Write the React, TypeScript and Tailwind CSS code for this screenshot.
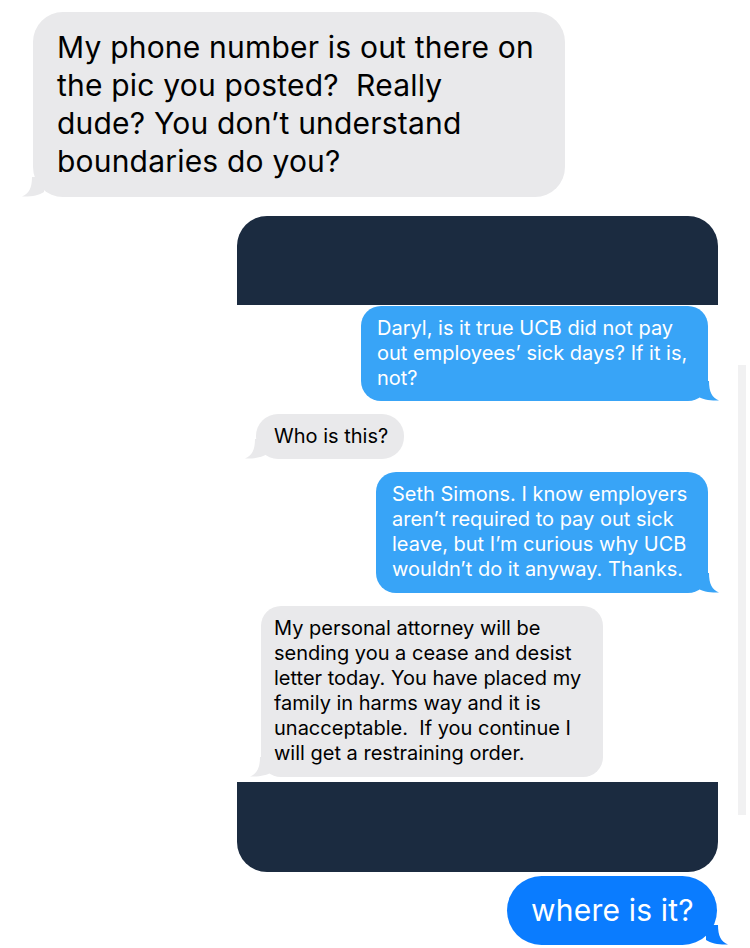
const font = { fontFamily: "Inter, 'Liberation Sans', sans-serif" };

function TailLeft({ color }: { color: string }) {
  return (
    <svg className="absolute -left-[11px] bottom-0" width="22" height="20" viewBox="0 0 22 20">
      <path d="M22 0 L22 15 C17 18.5 8 20 0 19.5 C7 16.5 10 11 10 0 Z" fill={color} />
    </svg>
  );
}

function TailRight({ color }: { color: string }) {
  return (
    <svg className="absolute -right-[11px] bottom-0" width="22" height="20" viewBox="0 0 22 20">
      <path d="M0 0 L0 15 C5 18.5 14 20 22 19.5 C15 16.5 12 11 12 0 Z" fill={color} />
    </svg>
  );
}

export default function App() {
  return (
    <div className="relative w-[750px] h-[948px] bg-white overflow-hidden text-black" style={font}>
      {/* incoming message */}
      <div className="relative ml-[33px] mt-[12px] w-[532px] h-[185px] rounded-[30px] bg-[#e9e9eb] pl-[24px] pt-[16px] text-[30px] leading-[38px] tracking-[0.2px]">
        <p>My phone number is out there on</p>
        <p>the pic you posted?&nbsp; Really</p>
        <p>dude? You don’t understand</p>
        <p>boundaries do you?</p>
        <TailLeft color="#e9e9eb" />
      </div>

      {/* embedded screenshot */}
      <div className="ml-[237px] mt-[19px] w-[481px] h-[656px] flex flex-col">
        <div className="h-[89px] rounded-t-[30px] bg-[#1b2b40]" />
        <div className="flex-1 flex flex-col pt-[1px] text-[20px] leading-[25px]">
          <div className="relative self-end mr-[10px] w-[347px] h-[95px] rounded-[20px] bg-[#38a4f7] text-white pl-[16px] pt-[10px]">
            <p>Daryl, is it true UCB did not pay</p>
            <p>out employees’ sick days? If it is,</p>
            <p>not?</p>
            <TailRight color="#38a4f7" />
          </div>
          <div className="relative ml-[19px] mt-[13px] w-[148px] h-[45px] rounded-[22px] bg-[#e9e9eb] pl-[18px] pt-[10px]">
            <p>Who is this?</p>
            <TailLeft color="#e9e9eb" />
          </div>
          <div className="relative self-end mr-[10px] mt-[13px] w-[332px] h-[121px] rounded-[20px] bg-[#38a4f7] text-white pl-[16px] pt-[10px]">
            <p>Seth Simons. I know employers</p>
            <p>aren’t required to pay out sick</p>
            <p>leave, but I’m curious why UCB</p>
            <p>wouldn’t do it anyway. Thanks.</p>
            <TailRight color="#38a4f7" />
          </div>
          <div className="relative ml-[24px] mt-[13px] w-[342px] h-[171px] rounded-[20px] bg-[#e9e9eb] pl-[13px] pt-[10px]">
            <p>My personal attorney will be</p>
            <p>sending you a cease and desist</p>
            <p>letter today. You have placed my</p>
            <p>family in harms way and it is</p>
            <p>unacceptable.&nbsp; If you continue I</p>
            <p>will get a restraining order.</p>
            <TailLeft color="#e9e9eb" />
          </div>
        </div>
        <div className="h-[90px] rounded-b-[30px] bg-[#1b2b40]" />
      </div>

      {/* scroll indicator of the screenshot */}
      <div className="absolute left-[738px] top-[365px] w-[8px] h-[450px] bg-[#f1f1f2]" />

      {/* outgoing reply */}
      <div className="relative ml-[507px] mt-[4px] w-[210px] h-[69px] rounded-[35px] bg-[#0a7cff] text-white text-[30px] leading-[38px] pl-[24px] pt-[15px] tracking-[0.2px]">
        <p>where is it?</p>
        <TailRight color="#0a7cff" />
      </div>
    </div>
  );
}
